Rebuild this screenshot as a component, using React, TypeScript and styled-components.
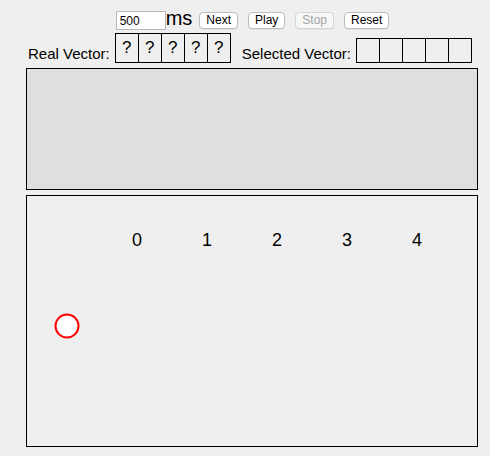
import React from "react";
import styled, { createGlobalStyle } from "styled-components";

const Global = createGlobalStyle`
  html, body { margin: 0; padding: 0; background: #efefef; }
  body { font-family: "Liberation Sans", Arial, sans-serif; color: #000; }
`;

const Page = styled.div`
  width: 452px;
  padding: 11px 0 0 26px;
  display: flex;
  flex-direction: column;
`;

const Controls = styled.div`
  display: flex;
  align-items: center;
  justify-content: center;
  height: 19px;
  padding-left: 1px;
`;

const DelayInput = styled.input`
  width: 50px;
  height: 19px;
  box-sizing: border-box;
  border: 1px solid #b8b8b8;
  background: #fff;
  font-family: "Liberation Sans", Arial, sans-serif;
  font-size: 12px;
  padding: 1px 3px 0;
  margin: 0;
  outline: none;
`;

const Unit = styled.span`
  font-size: 20px;
  line-height: 19px;
  margin-top: -4px;
  margin-right: 7px;
`;

const Button = styled.button<{ $first?: boolean }>`
  height: 17px;
  box-sizing: border-box;
  margin: 0 0 0 ${(p) => (p.$first ? 0 : 10)}px;
  padding: 0 6px;
  border: 1px solid #bdbdbd;
  border-radius: 4px;
  background: #fff;
  color: #000;
  font-family: "Liberation Sans", Arial, sans-serif;
  font-size: 12px;
  line-height: 15px;
  box-shadow: 0 1px 0 rgba(0, 0, 0, 0.05);
  &:disabled {
    color: #a3a3a3;
    background: #f7f7f7;
    border-color: #d6d6d6;
  }
`;

const VectorRow = styled.div`
  display: flex;
  align-items: flex-end;
  margin: 3px 0 0 2px;
  height: 30px;
`;

const Label = styled.span`
  font-size: 15px;
  line-height: 17px;
  margin: 0 5px 1px 0;
`;

const Cells = styled.div<{ $gapAfter?: number }>`
  display: flex;
  border-left: 1px solid #000;
  margin-right: ${(p) => p.$gapAfter ?? 0}px;
`;

const Cell = styled.div<{ $tall?: boolean }>`
  width: 22px;
  height: ${(p) => (p.$tall ? 28 : 23)}px;
  border: 1px solid #000;
  border-left: none;
  display: flex;
  align-items: center;
  justify-content: center;
  font-size: 17px;
`;

const TopPanel = styled.div`
  margin-top: 5px;
  height: 120px;
  border: 1px solid #000;
  background: #dfdfdf;
`;

const Board = styled.div`
  margin-top: 5px;
  height: 250px;
  border: 1px solid #000;
  background: #efefef;
`;

const BoardSvg = styled.svg`
  display: block;
  width: 450px;
  height: 250px;
`;

const realVector = ["?", "?", "?", "?", "?"];
const selectedVector = ["", "", "", "", ""];
const columns = [0, 1, 2, 3, 4];

export default function App() {
  return (
    <>
      <Global />
      <Page>
        <Controls>
          <DelayInput defaultValue="500" />
          <Unit>ms</Unit>
          <Button $first>Next</Button>
          <Button>Play</Button>
          <Button disabled>Stop</Button>
          <Button>Reset</Button>
        </Controls>
        <VectorRow>
          <Label>Real Vector:</Label>
          <Cells $gapAfter={11}>
            {realVector.map((v, i) => (
              <Cell key={i} $tall>
                {v}
              </Cell>
            ))}
          </Cells>
          <Label>Selected Vector:</Label>
          <Cells>
            {selectedVector.map((v, i) => (
              <Cell key={i}>{v}</Cell>
            ))}
          </Cells>
        </VectorRow>
        <TopPanel />
        <Board>
          <BoardSvg viewBox="0 0 450 250">
            {columns.map((c) => (
              <text
                key={c}
                x={110 + c * 70}
                y={50}
                textAnchor="middle"
                fontFamily="Liberation Sans, Arial, sans-serif"
                fontSize={18}
                fill="#000"
              >
                {c}
              </text>
            ))}
            <circle cx={40} cy={130} r={11.5} fill="#fff" stroke="#f00" strokeWidth={2} />
          </BoardSvg>
        </Board>
      </Page>
    </>
  );
}
